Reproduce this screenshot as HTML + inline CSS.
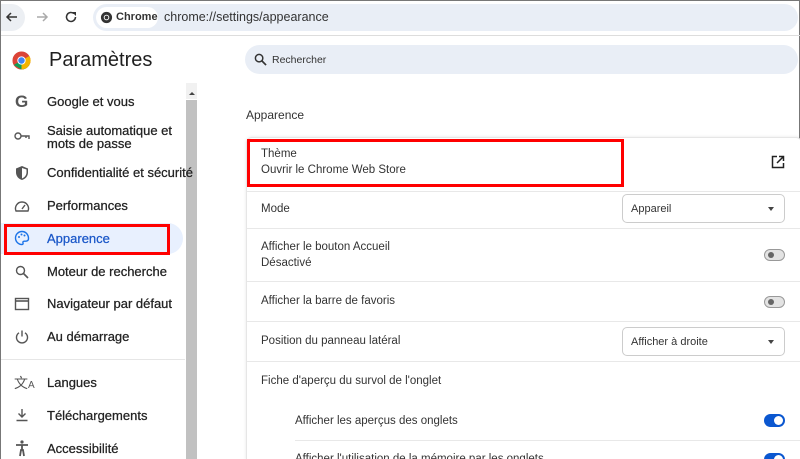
<!DOCTYPE html>
<html style="width:800px;height:459px;overflow:hidden"><head><meta charset="utf-8"><style>
*{box-sizing:border-box;margin:0;padding:0}
body{width:800px;height:459px;overflow:hidden;background:#fff;font-family:"Liberation Sans",sans-serif;color:#1f1f1f;position:relative;border-top:1px solid #777;border-left:1px solid #777;border-right:1px solid #777}
.a{position:absolute}
.nav{position:absolute;left:46px;font-size:13px;color:#222;-webkit-text-stroke:.25px #222}
.ic{position:absolute;left:12px;width:18px;height:18px}
.row{position:absolute;left:260px;font-size:11.5px;color:#333}
.hr{position:absolute;height:1px;background:#e8e8e8}
.tg{position:absolute;left:763px;width:21px;height:12px;border-radius:6px;background:#e3e3e3;border:1px solid #999}
.tg:after{content:"";position:absolute;left:3px;top:2px;width:6px;height:6px;border-radius:50%;background:#666}
.tb{position:absolute;left:763px;width:21px;height:13px;border-radius:7px;background:#0b57d0}
.tb:after{content:"";position:absolute;right:2px;top:2px;width:9px;height:9px;border-radius:50%;background:#fff}
.dd{position:absolute;left:621px;width:163px;height:29px;border:1px solid #ccc;border-radius:5px;font-size:11px;color:#333;padding:8px 0 0 8px}
.dd:after{content:"";position:absolute;right:10px;top:12px;border:3px solid transparent;border-top:4px solid #444}
</style></head><body>
<div class="a" style="left:0;top:3px;width:24px;height:27px;border-radius:0 14px 14px 0;background:#eceff3"></div>
<svg class="a" style="left:4px;top:9px" width="14" height="14" viewBox="0 0 14 14"><path d="M12 7H2M6 3L2 7l4 4" stroke="#333" stroke-width="1.5" fill="none"/></svg>
<svg class="a" style="left:34px;top:9px" width="14" height="14" viewBox="0 0 14 14"><path d="M2 7h10M8 3l4 4-4 4" stroke="#aaa" stroke-width="1.5" fill="none"/></svg>
<svg class="a" style="left:63px;top:9px" width="14" height="14" viewBox="0 0 14 14"><path d="M11.5 7A4.5 4.5 0 1 1 10 3.6" stroke="#333" stroke-width="1.5" fill="none"/><path d="M8 2h4v4z" fill="#333"/></svg>
<div class="a" style="left:92px;top:3px;width:705px;height:27px;border-radius:14px;background:#e9eef6"></div>
<div class="a" style="left:95px;top:6px;width:62px;height:21px;border-radius:11px;background:#fff"></div>
<svg class="a" style="left:99px;top:10px" width="13" height="13" viewBox="0 0 14 14"><circle cx="7" cy="7" r="6" fill="#333"/><circle cx="7" cy="7" r="3" fill="#fff"/><circle cx="7" cy="7" r="2" fill="#333"/></svg>
<div class="a" style="left:115px;top:10px;font-size:11px;font-weight:bold;color:#333">Chrome</div>
<div class="a" style="left:163px;top:9px;font-size:12.5px;color:#333">chrome://settings/appearance</div>
<div class="a" style="left:0;top:34px;width:800px;height:1px;background:#ddd"></div>
<svg class="a" style="left:11px;top:50px" width="19" height="19" viewBox="0 0 20 20"><circle cx="10" cy="10" r="9.5" fill="#db4437"/><path d="M10 10L18.2 14.8A9.5 9.5 0 0 1 10 19.5L1.8 14.8z" fill="#0f9d58"/><path d="M10 10L18.3 5.3A9.5 9.5 0 0 1 18.2 14.8 9.5 9.5 0 0 1 10 19.5z" fill="#f4b400"/><circle cx="10" cy="10" r="4.4" fill="#fff"/><circle cx="10" cy="10" r="3.4" fill="#4285f4"/></svg>
<div class="a" style="left:48px;top:48px;font-size:20px;color:#1f1f1f">Paramètres</div>
<div class="a" style="left:244px;top:44px;width:553px;height:29px;border-radius:15px;background:#e9eef6"></div>
<svg class="a" style="left:253px;top:52px" width="13" height="13" viewBox="0 0 14 14"><circle cx="5.5" cy="5.5" r="4" stroke="#333" stroke-width="1.6" fill="none"/><path d="M8.5 8.5L13 13" stroke="#333" stroke-width="1.8"/></svg>
<div class="a" style="left:271px;top:53px;font-size:10.5px;color:#333">Rechercher</div>
<div class="a" style="left:185px;top:82px;width:11px;height:16px;background:#f1f1f1"></div>
<div class="a" style="left:188px;top:88px;border:3px solid transparent;border-bottom:3px solid #444"></div>
<div class="a" style="left:185px;top:99px;width:11px;height:360px;background:#c1c1c1"></div>
<div class="a" style="left:0;top:222px;width:182px;height:31px;border-radius:0 16px 16px 0;background:#e8f0fe"></div>
<div class="a" style="left:3px;top:223px;width:166px;height:31px;border:3px solid #f00"></div>
<div class="a" style="left:14px;top:91px;font-size:17px;font-weight:bold;color:#555">G</div>
<div class="nav" style="top:93px">Google et vous</div>
<svg class="ic" style="top:126px" viewBox="0 0 18 18"><circle cx="5" cy="9" r="3" stroke="#555" stroke-width="1.4" fill="none"/><path d="M8 9h8v3M13 9v2" stroke="#555" stroke-width="1.4" fill="none"/></svg>
<div class="nav" style="top:123px;line-height:13px">Saisie automatique et<br>mots de passe</div>
<svg class="ic" style="top:163px" viewBox="0 0 18 18"><path d="M9 2l6 2.5v4C15 12 12.5 15 9 16 5.5 15 3 12 3 8.5v-4z" fill="#555"/><path d="M9 4v10.5C11.5 13.5 13.5 11 13.5 8.5V5.5z M9 9H4.5" fill="#fff"/></svg>
<div class="nav" style="top:164px">Confidentialité et sécurité</div>
<svg class="ic" style="top:196px" viewBox="0 0 18 18"><path d="M3 14A6.5 6.5 0 1 1 15 14z" stroke="#555" stroke-width="1.4" fill="none"/><path d="M9 12l3-4" stroke="#555" stroke-width="1.4"/></svg>
<div class="nav" style="top:197px">Performances</div>
<svg class="ic" style="top:228px" viewBox="0 0 18 18"><path d="M9 2.5a6.5 6.5 0 0 0 0 13c1 0 1.3-.7 1-1.5-.4-1 .2-1.8 1.3-1.8H13a2.5 2.5 0 0 0 2.5-2.7C15.5 5.5 12.7 2.5 9 2.5z" stroke="#1a73e8" stroke-width="1.4" fill="none"/><circle cx="6" cy="8" r="1" fill="#1a73e8"/><circle cx="8.5" cy="5.5" r="1" fill="#1a73e8"/><circle cx="11.5" cy="6.5" r="1" fill="#1a73e8"/></svg>
<div class="nav" style="top:230px;color:#1a57c8;-webkit-text-stroke:.25px #1a57c8">Apparence</div>
<svg class="ic" style="top:262px" viewBox="0 0 18 18"><circle cx="7.5" cy="7.5" r="4" stroke="#555" stroke-width="1.4" fill="none"/><path d="M10.5 10.5L15 15" stroke="#555" stroke-width="1.6"/></svg>
<div class="nav" style="top:263px">Moteur de recherche</div>
<svg class="ic" style="top:294px" viewBox="0 0 18 18"><rect x="2.5" y="3.5" width="13" height="11" stroke="#555" stroke-width="1.4" fill="none"/><path d="M2.5 6h13" stroke="#555" stroke-width="1.6"/></svg>
<div class="nav" style="top:295px">Navigateur par défaut</div>
<svg class="ic" style="top:327px" viewBox="0 0 18 18"><path d="M6 4.8A5.5 5.5 0 1 0 12 4.8" stroke="#555" stroke-width="1.4" fill="none"/><path d="M9 2.5v6" stroke="#555" stroke-width="1.4"/></svg>
<div class="nav" style="top:328px">Au démarrage</div>
<div class="a" style="left:0;top:358px;width:184px;height:1px;background:#e6e6e6"></div>
<div class="a" style="left:13px;top:372px;font-size:14px;color:#555">文<span style="font-size:10px">A</span></div>
<div class="nav" style="top:374px">Langues</div>
<svg class="ic" style="top:405px" viewBox="0 0 18 18"><path d="M9 3v8M5.5 7.5L9 11l3.5-3.5M3.5 14.5h11" stroke="#555" stroke-width="1.4" fill="none"/></svg>
<div class="nav" style="top:407px">Téléchargements</div>
<svg class="ic" style="top:438px" viewBox="0 0 18 18"><circle cx="9" cy="3" r="1.6" fill="#555"/><path d="M3 6h12M9 6v5M7 17l1-6h2l1 6" stroke="#555" stroke-width="1.8" fill="none"/></svg>
<div class="nav" style="top:440px">Accessibilité</div>
<div class="a" style="left:245px;top:107px;font-size:12px;color:#333">Apparence</div>
<div class="a" style="left:245px;top:136px;width:556px;height:323px;border:1px solid #e6e6e6;border-bottom:0;border-radius:6px 6px 0 0;box-shadow:0 0 3px rgba(0,0,0,.1);background:#fff;overflow:hidden"></div>
<div class="row" style="top:147px">Thème</div>
<div class="row" style="top:163px">Ouvrir le Chrome Web Store</div>
<div class="a" style="left:246px;top:138px;width:377px;height:48px;border:3px solid #f00"></div>
<svg class="a" style="left:770px;top:154px" width="14" height="14" viewBox="0 0 14 14"><path d="M6 1.5H1.5v11h11V8M8 1.5h4.5V6M12.5 1.5L6 8" stroke="#222" stroke-width="1.5" fill="none"/></svg>
<div class="hr" style="left:246px;top:190px;width:554px"></div>
<div class="row" style="top:202px">Mode</div>
<div class="dd" style="top:193px">Appareil</div>
<div class="hr" style="left:246px;top:227px;width:554px"></div>
<div class="row" style="top:240px">Afficher le bouton Accueil</div>
<div class="row" style="top:256px">Désactivé</div>
<div class="tg" style="top:248px"></div>
<div class="hr" style="left:246px;top:280px;width:554px"></div>
<div class="row" style="top:294px">Afficher la barre de favoris</div>
<div class="tg" style="top:295px"></div>
<div class="hr" style="left:246px;top:320px;width:554px"></div>
<div class="row" style="top:334px">Position du panneau latéral</div>
<div class="dd" style="top:326px">Afficher à droite</div>
<div class="hr" style="left:246px;top:360px;width:554px"></div>
<div class="row" style="top:374px">Fiche d'aperçu du survol de l'onglet</div>
<div class="row" style="left:294px;top:414px">Afficher les aperçus des onglets</div>
<div class="tb" style="top:413px"></div>
<div class="hr" style="left:294px;top:439px;width:506px"></div>
<div class="row" style="left:294px;top:452px">Afficher l'utilisation de la mémoire par les onglets</div>
<div class="tb" style="top:452px"></div>
</body></html>
